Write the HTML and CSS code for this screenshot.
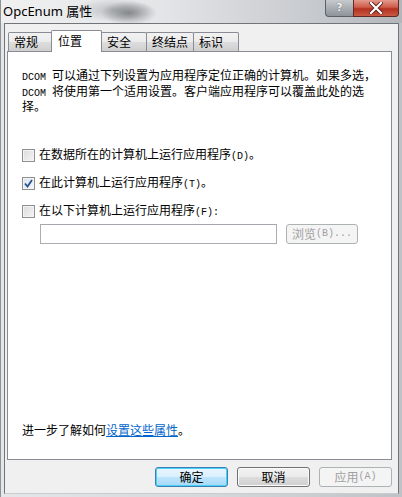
FILE: index.html
```html
<!DOCTYPE html>
<html lang="zh">
<head>
<meta charset="utf-8">
<title>OpcEnum 属性</title>
<link rel="stylesheet" href="styles.css">
</head>
<body>
<div class="window">
  <div class="titlebar">
    <span class="title">OpcEnum 属性</span>
    <div class="caption-buttons">
      <div class="cap-btn help"><span class="help-glyph">?</span></div>
      <div class="cap-btn close">
        <svg width="14" height="12" viewBox="0 0 14 12">
          <path d="M2 1 L12 11 M12 1 L2 11" stroke="#5a2020" stroke-width="4" stroke-linecap="square"/>
          <path d="M2 1 L12 11 M12 1 L2 11" stroke="#ffffff" stroke-width="2.2" stroke-linecap="square"/>
        </svg>
      </div>
    </div>
  </div>
  <div class="client">
    <div class="tabs">
      <div class="tab">常规</div>
      <div class="tab active">位置</div>
      <div class="tab">安全</div>
      <div class="tab">终结点</div>
      <div class="tab">标识</div>
    </div>
    <div class="panel">
      <p class="intro"><span class="mono">DCOM </span>可以通过下列设置为应用程序定位正确的计算机。如果多选，<br><span class="mono">DCOM </span>将使用第一个适用设置。客户端应用程序可以覆盖此处的选<br>择。</p>
      <div class="options">
        <label class="opt"><span class="box"></span><span>在数据所在的计算机上运行应用程序<span class="mono">(D)</span>。</span></label>
        <label class="opt"><span class="box checked">
          <svg width="9" height="9" viewBox="0 0 9 9"><path d="M1 4.5 L3.5 7.5 L8 1" fill="none" stroke="#2a4f8f" stroke-width="1.8"/></svg>
        </span><span>在此计算机上运行应用程序<span class="mono">(T)</span>。</span></label>
        <label class="opt"><span class="box"></span><span>在以下计算机上运行应用程序<span class="mono">(F):</span></span></label>
        <div class="remote-row">
          <div class="textbox"></div>
          <div class="btn disabled small">浏览<span class="mono">(B)...</span></div>
        </div>
      </div>
      <div class="spacer"></div>
      <p class="more">进一步了解如何<a class="link">设置这些属性</a>。</p>
    </div>
    <div class="footer">
      <div class="btn default">确定</div>
      <div class="btn">取消</div>
      <div class="btn disabled">应用<span class="mono">(A)</span></div>
    </div>
  </div>
</div>
</body>
</html>
```

FILE: styles.css
```css
html, body {
  margin: 0;
  padding: 0;
}
body {
  width: 402px;
  height: 497px;
  overflow: hidden;
  font-family: "Noto Sans CJK SC", "Noto Sans", sans-serif;
  font-size: 12px;
  color: #000;
}
.window {
  width: 402px;
  height: 497px;
  box-sizing: border-box;
  display: flex;
  flex-direction: column;
  background: linear-gradient(90deg, #e4e6e8 0%, #d6d9dc 50%, #bfc3c7 100%);
  border-left: 1px solid #8d9297;
  padding: 0 3px 3px 3px;
}
.titlebar {
  height: 23px;
  flex: none;
  display: flex;
  align-items: flex-start;
  justify-content: space-between;
  margin: 0 -3px;
  padding: 0 3px;
  background:
    radial-gradient(ellipse 28px 12px at 128px 13px, rgba(70,75,80,0.55), rgba(70,75,80,0) 100%),
    radial-gradient(ellipse 40px 12px at 112px 10px, rgba(110,115,120,0.35), rgba(110,115,120,0) 100%),
    linear-gradient(90deg, #f0f0f0 0%, #e3e5e7 40%, #c9ccd0 75%, #b3b7bb 100%);
}
.title {
  font-family: "Noto Sans", "Noto Sans CJK SC", sans-serif;
  font-size: 13px;
  line-height: 22px;
  color: #000;
  margin-left: -1px;
}
.caption-buttons {
  display: flex;
}
.cap-btn {
  height: 17px;
  box-sizing: border-box;
  border: 1px solid #5b6168;
  border-top: none;
  display: flex;
  align-items: center;
  justify-content: center;
}
.help {
  width: 28px;
  border-radius: 0 0 0 4px;
  background: linear-gradient(180deg, #c6cacd 0%, #a9aeb3 50%, #8d949a 100%);
  border-right: none;
}
.help-glyph {
  font-family: "DejaVu Sans", sans-serif;
  font-weight: bold;
  font-size: 11px;
  line-height: 14px;
  color: #f3f3f3;
  text-shadow: 0 0 1px #3a3f44;
}
.close {
  width: 46px;
  border-radius: 0 0 4px 0;
  background: linear-gradient(180deg, #e39a8d 0%, #cf5b4a 45%, #b3301f 55%, #c95a45 100%);
  border-color: #5e2a22;
}
.client {
  flex: 1;
  display: flex;
  flex-direction: column;
  background: #f0f0f0;
  border: 1px solid #717579;
  border-bottom-color: #c9cbcd;
  padding: 6px 6px 0 2px;
}
.mono {
  font-family: "Liberation Mono", monospace;
  font-size: 10px;
}
.tabs {
  display: flex;
  align-items: flex-end;
  height: 21px;
  padding-left: 1px;
  position: relative;
  z-index: 1;
}
.tab {
  min-width: 46px;
  box-sizing: border-box;
  height: 19px;
  padding: 0 5px;
  line-height: 17px;
  border: 1px solid #898c95;
  border-bottom: none;
  margin-right: -1px;
  background: linear-gradient(180deg, #f2f2f2 0%, #ebebeb 50%, #dddddd 51%, #cfcfcf 100%);
  border-radius: 2px 2px 0 0;
}
.tab.active {
  height: 22px;
  margin: 0 -1px -1px -2px;
  min-width: 51px;
  padding: 0 6px;
  background: #ffffff;
  line-height: 20px;
  position: relative;
  z-index: 2;
}
.panel {
  background: #ffffff;
  border: 1px solid #898c95;
  height: 409px;
  box-sizing: border-box;
  display: flex;
  flex-direction: column;
  padding: 17px 10px 0 14px;
}
.intro {
  margin: 0;
  line-height: 12.5px;
  font-size: 12px;
  white-space: nowrap;
}
.options {
  display: flex;
  flex-direction: column;
  margin-top: 29px;
}
.opt {
  display: flex;
  align-items: center;
  height: 28px;
  gap: 4px;
  line-height: 14px;
}
.box {
  width: 13px;
  height: 13px;
  box-sizing: border-box;
  border: 1px solid #8e8f8f;
  background: linear-gradient(135deg, #dcdcdc 0%, #f4f4f4 100%);
  box-shadow: inset 0 0 0 1px #f4f4f4;
  display: flex;
  align-items: center;
  justify-content: center;
}
.box.checked {
  background: linear-gradient(135deg, #d6e4f2 0%, #f6f9fc 100%);
}
.remote-row {
  display: flex;
  align-items: center;
  gap: 9px;
  padding-left: 18px;
  margin-top: -2px;
}
.textbox {
  width: 237px;
  height: 20px;
  box-sizing: border-box;
  border: 1px solid #abadb3;
  border-top-color: #a4a7ae;
  background: #fff;
}
.spacer {
  flex: 1;
}
.more {
  margin: 0 0 22px 0;
  line-height: 14px;
}
.link {
  color: #0066cc;
  text-decoration: underline;
}
.footer {
  display: flex;
  justify-content: flex-end;
  gap: 9px;
  padding-top: 7px;
}
.btn {
  width: 73px;
  height: 20px;
  box-sizing: border-box;
  border: 1px solid #707070;
  border-radius: 3px;
  background: linear-gradient(180deg, #f2f2f2 0%, #ebebeb 49%, #dddddd 50%, #cfcfcf 100%);
  display: flex;
  align-items: center;
  justify-content: center;
  line-height: 14px;
  box-shadow: inset 0 0 0 1px #fbfbfb;
}
.btn.default {
  border-color: #3c7fb1;
  box-shadow: inset 0 0 0 1px #48d2fb;
  background: linear-gradient(180deg, #eaf6fd 0%, #d9f0fc 49%, #bee6fd 50%, #a7d9f5 100%);
}
.btn.disabled {
  border-color: #adb2b5;
  background: #f4f4f4;
  color: #a0a0a0;
  box-shadow: none;
}
.btn.small {
  width: 72px;
}
```
